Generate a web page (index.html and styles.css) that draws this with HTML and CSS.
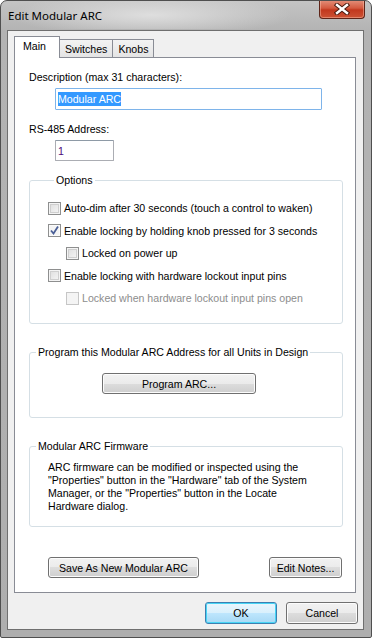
FILE: index.html
```html
<!DOCTYPE html>
<html>
  <head>
    <meta charset="UTF-8" />
    <title>Edit Modular ARC</title>
    <link rel="stylesheet" href="styles.css">
  </head>
  <body>
    <div class="window">
      <div class="titlebar">
        <span class="title">Edit Modular ARC</span>
        <div class="close-btn">
          <svg width="16" height="12" viewBox="0 0 16 12">
            <path d="M3 2 L13 10 M13 2 L3 10" stroke="#4a1c12" stroke-width="4.4" stroke-linecap="square" fill="none"/>
            <path d="M3 2 L13 10 M13 2 L3 10" stroke="#ffffff" stroke-width="2.4" stroke-linecap="square" fill="none"/>
          </svg>
        </div>
      </div>

      <div class="client">
        <div class="tabs">
          <div class="tab selected">Main</div>
          <div class="tab">Switches</div>
          <div class="tab">Knobs</div>
        </div>

        <div class="tab-panel">
          <div class="label desc-label">Description (max 31 characters):</div>
          <div class="textbox desc-box"><span class="selection">Modular ARC</span></div>

          <div class="label addr-label">RS-485 Address:</div>
          <div class="textbox addr-box">1</div>

          <fieldset class="group options">
            <legend>Options</legend>
            <div class="check-row">
              <span class="checkbox"></span>
              <span>Auto-dim after 30 seconds (touch a control to waken)</span>
            </div>
            <div class="check-row">
              <span class="checkbox">
                <svg width="9" height="9" viewBox="0 0 9 9"><path d="M1 4.5 L3.5 7.5 L8 0.5" stroke="#4a5f97" stroke-width="1.8" fill="none"/></svg>
              </span>
              <span>Enable locking by holding knob pressed for 3 seconds</span>
            </div>
            <div class="check-row indent">
              <span class="checkbox"></span>
              <span>Locked on power up</span>
            </div>
            <div class="check-row">
              <span class="checkbox"></span>
              <span>Enable locking with hardware lockout input pins</span>
            </div>
            <div class="check-row indent disabled">
              <span class="checkbox"></span>
              <span>Locked when hardware lockout input pins open</span>
            </div>
          </fieldset>

          <fieldset class="group program">
            <legend>Program this Modular ARC Address for all Units in Design</legend>
            <div class="program-row">
              <button class="btn program-btn">Program ARC...</button>
            </div>
          </fieldset>

          <fieldset class="group firmware">
            <legend>Modular ARC Firmware</legend>
            <p>ARC firmware can be modified or inspected using the "Properties" button in the "Hardware" tab of the System Manager, or the "Properties" button in the Locate Hardware dialog.</p>
          </fieldset>

          <div class="panel-buttons">
            <button class="btn save-btn">Save As New Modular ARC</button>
            <button class="btn notes-btn">Edit Notes...</button>
          </div>
        </div>

        <div class="dialog-buttons">
          <button class="btn default">OK</button>
          <button class="btn">Cancel</button>
        </div>
      </div>
    </div>
  </body>
</html>
```

FILE: styles.css
```css
body {
  margin: 0;
  font-family: "Liberation Sans", Arial, sans-serif;
  font-size: 10.6px;
  color: #000;
}
.window {
  width: 372px;
  height: 638px;
  box-sizing: border-box;
  border: 1px solid #4f4f4f;
  border-radius: 7px 7px 2px 2px;
  background: linear-gradient(to bottom, #c4c4c4 0px, #b3b3b3 30px, #aeaeae 100%);
  display: flex;
  flex-direction: column;
  overflow: hidden;
}
.titlebar {
  height: 28px;
  display: flex;
  align-items: flex-start;
  justify-content: space-between;
  background: radial-gradient(ellipse 140px 22px at 150px 14px, #dedede, rgba(222,222,222,0) 100%);
}
.title {
  font-family: "Noto Sans", "Open Sans", sans-serif;
  font-size: 11.5px;
  margin: 7px 0 0 7px;
  color: #000;
}
.close-btn {
  width: 46px;
  height: 19px;
  margin: -1px 6px 0 0;
  box-sizing: border-box;
  border: 1px solid #5e2418;
  border-top: none;
  border-radius: 0 0 4px 4px;
  background: linear-gradient(to bottom, #e4917c 0%, #d45a40 45%, #c2381e 55%, #cc5234 100%);
  box-shadow: inset 0 0 0 1px rgba(255, 200, 180, 0.45);
  display: flex;
  align-items: center;
  justify-content: center;
}
.client {
  flex: 1;
  margin: 1px 7px 7px 6px;
  border: 1px solid #6f6f6f;
  background: #f0f0f0;
  display: flex;
  flex-direction: column;
}
.tabs {
  display: flex;
  height: 21px;
  margin: 5px 0 0 6px;
  align-items: flex-end;
}
.tab {
  height: 18px;
  box-sizing: border-box;
  padding: 2px 5px 0 5px;
  border: 1px solid #898c95;
  border-bottom: none;
  border-left: none;
  background: linear-gradient(to bottom, #f3f3f3, #e4e4e4);
  line-height: 14px;
}
.tab.selected {
  height: 22px;
  padding: 2px 8px 0 8px;
  background: #fff;
  border-left: 1px solid #898c95;
  margin-bottom: -1px;
  position: relative;
  z-index: 1;
  width: 46px;
}
.tab-panel {
  width: 342px;
  height: 536px;
  box-sizing: border-box;
  margin-left: 6px;
  border: 1px solid #898c95;
  background: #fff;
  padding: 0 12px 0 14px;
  display: flex;
  flex-direction: column;
}
.label {
  line-height: 13px;
}
.desc-label {
  margin-top: 13px;
}
.textbox {
  box-sizing: border-box;
  border: 1px solid #abadb3;
  border-top-color: #8e9aa6;
  border-radius: 1px;
  background: #fff;
  margin-left: 26px;
  padding: 3px 2px;
  line-height: 14px;
}
.desc-box {
  width: 267px;
  height: 22px;
  margin-top: 4px;
  border-color: #7eb4ea;
}
.selection {
  background: #3399ff;
  color: #fff;
  padding: 1px 0;
}
.addr-label {
  margin-top: 13px;
}
.addr-box {
  width: 59px;
  height: 21px;
  margin-top: 4px;
  color: #4b0a7a;
}
.group {
  margin: 0;
  border: 1px solid #d5dfe5;
  border-radius: 3px;
  padding: 0;
  width: 314px;
  box-sizing: border-box;
}
.group legend {
  padding: 0 2px;
  margin-left: 6px;
  line-height: 13px;
}
.options {
  margin-top: 13px;
  height: 150px;
  padding: 10px 0 0 18px;
}
.check-row {
  display: flex;
  align-items: center;
  height: 22.5px;
  gap: 3px;
}
.check-row.indent {
  padding-left: 18px;
}
.checkbox {
  width: 13px;
  height: 13px;
  box-sizing: border-box;
  border: 1px solid #8e8f8f;
  background: linear-gradient(135deg, #dcdcdc, #f8f8f8);
  box-shadow: inset 0 0 0 1px #f4f4f4, inset 0 0 0 2px #cfcfcf;
  display: flex;
  align-items: center;
  justify-content: center;
}
.check-row:nth-child(3) .checkbox {
  background: #f4f4f4;
  box-shadow: inset 0 0 0 1px #fbfbfb;
}
.disabled {
  color: #8d8d8d;
}
.disabled .checkbox {
  border-color: #c6c6c6;
  background: #f4f4f4;
  box-shadow: none;
}
.program {
  margin-top: 22px;
  height: 72px;
}
.program-row {
  display: flex;
  padding: 14px 0 0 72px;
}
.btn {
  font-family: "Liberation Sans", Arial, sans-serif;
  font-size: 10.6px;
  color: #000;
  height: 21px;
  box-sizing: border-box;
  border: 1px solid #707070;
  border-radius: 3px;
  background: linear-gradient(to bottom, #f2f2f2 0%, #ebebeb 50%, #dddddd 50%, #cfcfcf 100%);
  box-shadow: inset 0 0 0 1px #fcfcfc;
  padding: 0;
}
.program-btn {
  width: 154px;
}
.firmware {
  margin-top: 22px;
  height: 87px;
}
.firmware p {
  width: 268px;
  margin: 8px 0 0 18px;
  line-height: 13px;
}
.panel-buttons {
  display: flex;
  justify-content: space-between;
  margin-top: 30px;
  padding: 0 0 0 19px;
  width: 313px;
  box-sizing: border-box;
}
.save-btn {
  width: 151px;
}
.notes-btn {
  width: 73px;
}
.dialog-buttons {
  display: flex;
  justify-content: flex-end;
  gap: 9px;
  margin: 9px 5px 0 0;
}
.dialog-buttons .btn {
  width: 72px;
  height: 22px;
}
.btn.default {
  border-color: #3c7fb1;
  box-shadow: inset 0 0 0 1px #48d5f5;
  background: linear-gradient(to bottom, #eaf6fd 0%, #d9f0fc 50%, #bee6fd 50%, #a7d9f5 100%);
}
```
